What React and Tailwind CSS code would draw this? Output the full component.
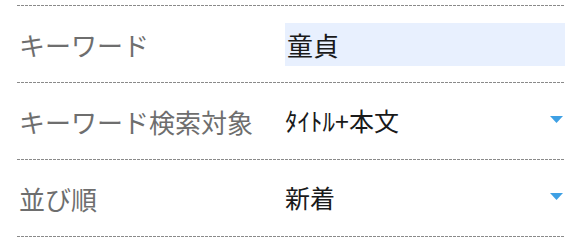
const Dash = () => (
  <div className="h-px w-full bg-[repeating-linear-gradient(to_right,#8a8a8a_0_3px,transparent_3px_4px)]" />
);

const Caret = () => (
  <svg width="13" height="7" viewBox="0 0 13 7" className="mb-[4px] shrink-0">
    <path d="M0 0h13L6.5 7z" fill="#3ea0e4" />
  </svg>
);

function Row({ label, children }) {
  return (
    <>
      <div className="flex h-[76px] items-center">
        <div className="w-[268px] shrink-0 pl-[2px] text-[26px] text-[#6e6e6e]">{label}</div>
        <div className="flex flex-1 items-center">{children}</div>
      </div>
      <Dash />
    </>
  );
}

export default function App() {
  return (
    <div
      className="w-[580px] h-[239px] bg-white pl-[17px] pr-[15px] pt-[5px]"
      style={{ fontFamily: '"Noto Sans CJK JP", "Noto Sans", sans-serif' }}
    >
      <Dash />
      <Row label="キーワード">
        <div className="flex h-[43px] w-full items-center bg-[#e8f0fe] pl-[2px] text-[26px] text-[#1a1a1a]">
          童貞
        </div>
      </Row>
      <Row label="キーワード検索対象">
        <div className="flex w-full items-center justify-between pr-[2px]">
          <span className="text-[25px] text-[#1a1a1a]">ﾀｲﾄﾙ+本文</span>
          <Caret />
        </div>
      </Row>
      <Row label="並び順">
        <div className="flex w-full items-center justify-between pr-[2px]">
          <span className="text-[25px] text-[#1a1a1a]">新着</span>
          <Caret />
        </div>
      </Row>
    </div>
  );
}
